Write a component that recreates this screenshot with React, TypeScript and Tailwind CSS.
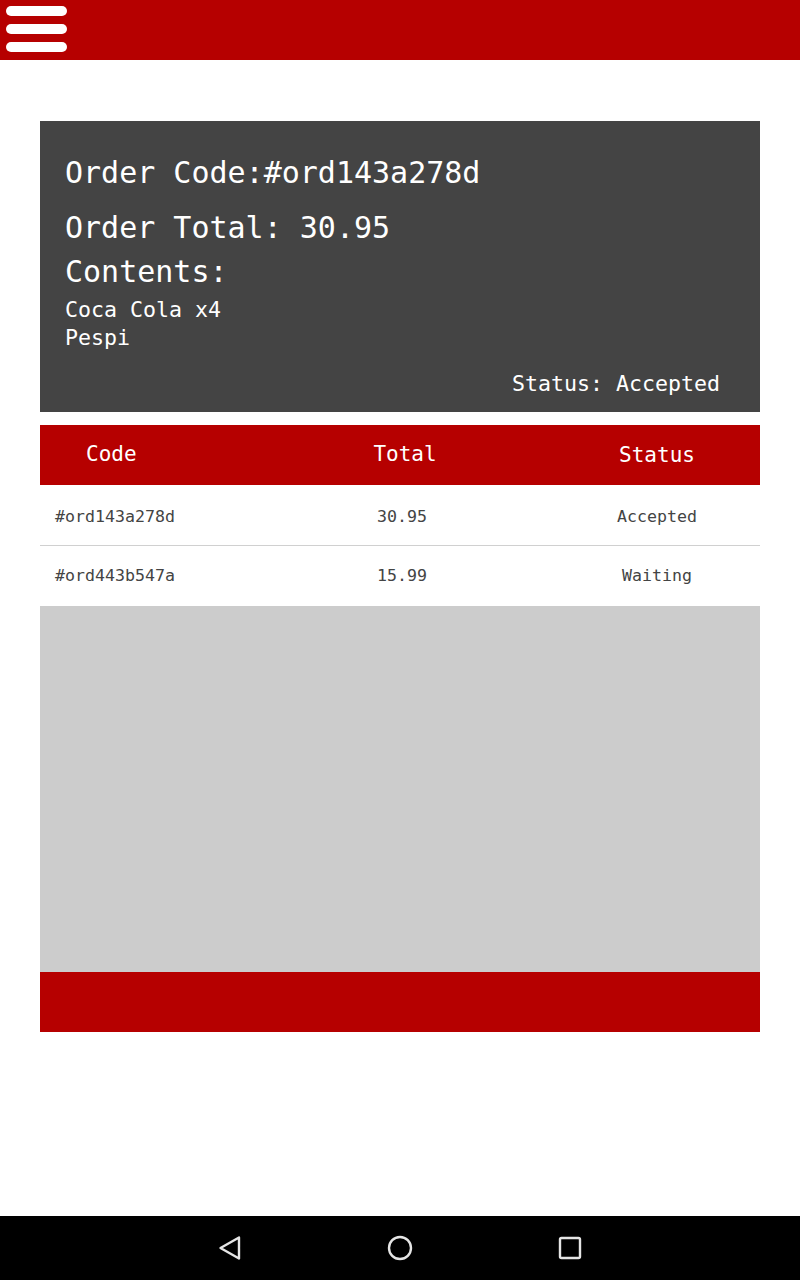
import React from "react";

const orders = [
  { code: "#ord143a278d", total: "30.95", status: "Accepted" },
  { code: "#ord443b547a", total: "15.99", status: "Waiting" },
];

const mono = { fontFamily: '"DejaVu Sans Mono", "Liberation Mono", monospace' };

function NavBar() {
  return (
    <div className="mt-auto h-16 bg-black flex items-center justify-center gap-[143px]">
      <svg width="26" height="28" viewBox="0 0 26 28" fill="none">
        <path d="M22 3.5 L3.5 14 L22 24.5 Z" stroke="#e5e5e5" strokeWidth="2.4" strokeLinejoin="round" />
      </svg>
      <svg width="28" height="28" viewBox="0 0 28 28" fill="none">
        <circle cx="14" cy="14" r="11" stroke="#e5e5e5" strokeWidth="2.4" />
      </svg>
      <svg width="26" height="26" viewBox="0 0 26 26" fill="none">
        <rect x="3" y="3" width="20" height="20" rx="1.5" stroke="#e5e5e5" strokeWidth="2.4" />
      </svg>
    </div>
  );
}

export default function App() {
  return (
    <div className="h-[1280px] w-[800px] bg-white flex flex-col" style={mono}>
      {/* top bar */}
      <div className="h-[60px] bg-[#b60000] shrink-0">
        <div className="flex flex-col gap-[8px] pl-[6px] pt-[6px]">
          <div className="w-[61px] h-[10px] rounded-full bg-white" />
          <div className="w-[61px] h-[10px] rounded-full bg-white" />
          <div className="w-[61px] h-[10px] rounded-full bg-white" />
        </div>
      </div>

      <div className="px-10">
        {/* selected order card */}
        <div className="mt-[61px] h-[291px] bg-[#444444] text-white pl-[25px] pr-[40px] pt-[32px]">
          <div className="text-[30px] leading-[40px] mb-[15px]">Order Code:#ord143a278d</div>
          <div className="text-[30px] leading-[40px]">Order Total: 30.95</div>
          <div className="text-[30px] leading-[40px] mt-[4px]">Contents:</div>
          <div className="text-[21.6px] leading-[28px] mt-[4px]">Coca Cola x4</div>
          <div className="text-[21.6px] leading-[28px]">Pespi</div>
          <div className="text-[21.6px] leading-[28px] mt-[18px] text-right">Status: Accepted</div>
        </div>

        {/* orders table */}
        <div className="mt-[13px]">
          <div className="h-[60px] bg-[#b60000] text-white text-[21px] flex items-center">
            <div className="w-[333px] pl-[46px]">Code</div>
            <div className="w-[64px] text-center">Total</div>
            <div className="w-[176px]" />
            <div className="w-[88px] text-center pt-[2px]">Status</div>
          </div>
          {orders.map((o, i) => (
            <div
              key={o.code}
              className={
                "flex items-center text-[16.6px] text-[#444444] " +
                (i === 0 ? "h-[61px] pt-[5px] border-b border-[#d0d0d0]" : "h-[60px] pt-[1px]")
              }
            >
              <div className="w-[333px] pl-[15px]">{o.code}</div>
              <div className="w-[58px] text-center">{o.total}</div>
              <div className="w-[182px]" />
              <div className="w-[88px] text-center">{o.status}</div>
            </div>
          ))}
          <div className="h-[366px] bg-[#cccccc]" />
          <div className="h-[60px] bg-[#b60000]" />
        </div>
      </div>

      <NavBar />
    </div>
  );
}
